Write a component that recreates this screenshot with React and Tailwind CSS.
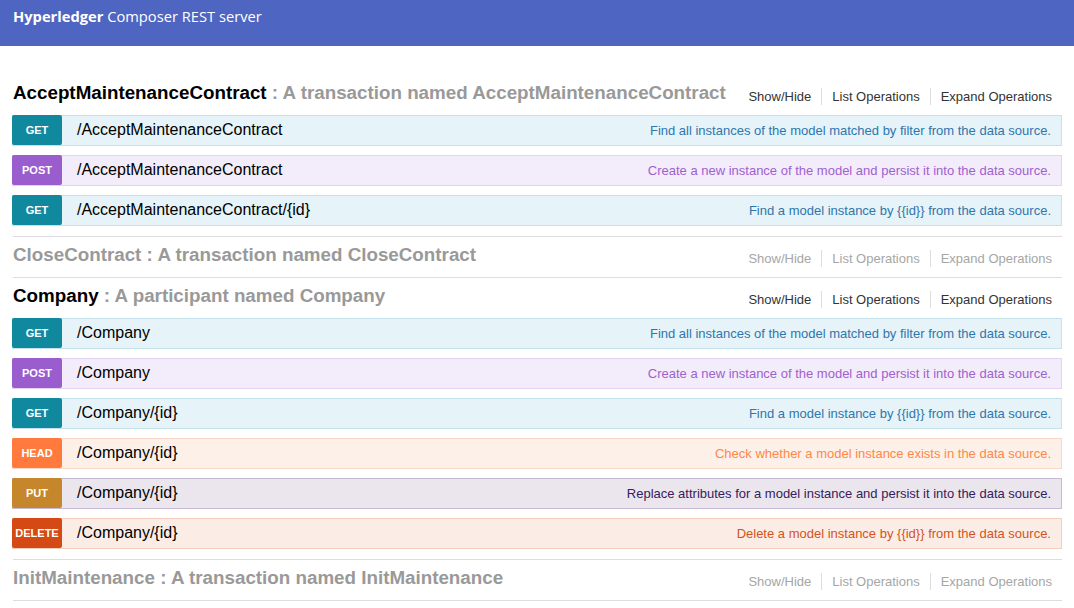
const METHODS = {
  GET: { badge: "bg-[#10889e]", row: "bg-[#e6f3f8] border-[#c3e2ec]", desc: "text-[#2f76ad]" },
  POST: { badge: "bg-[#9a5dce]", row: "bg-[#f3ecfa] border-[#e3d2f3]", desc: "text-[#9e61d0]" },
  HEAD: { badge: "bg-[#ff7a3c]", row: "bg-[#fdf0e8] border-[#fad8c6]", desc: "text-[#ff8748]" },
  PUT: { badge: "bg-[#c6862b]", row: "bg-[#ebe6ee] border-[#c8bad4]", desc: "text-[#37205a]" },
  DELETE: { badge: "bg-[#d44914]", row: "bg-[#fbede6] border-[#f5cdbb]", desc: "text-[#d4531c]" },
};

const resources = [
  {
    name: "AcceptMaintenanceContract",
    desc: "A transaction named AcceptMaintenanceContract",
    open: true,
    ops: [
      ["GET", "/AcceptMaintenanceContract", "Find all instances of the model matched by filter from the data source."],
      ["POST", "/AcceptMaintenanceContract", "Create a new instance of the model and persist it into the data source."],
      ["GET", "/AcceptMaintenanceContract/{id}", "Find a model instance by {{id}} from the data source."],
    ],
  },
  { name: "CloseContract", desc: "A transaction named CloseContract", open: false, ops: [] },
  {
    name: "Company",
    desc: "A participant named Company",
    open: true,
    ops: [
      ["GET", "/Company", "Find all instances of the model matched by filter from the data source."],
      ["POST", "/Company", "Create a new instance of the model and persist it into the data source."],
      ["GET", "/Company/{id}", "Find a model instance by {{id}} from the data source."],
      ["HEAD", "/Company/{id}", "Check whether a model instance exists in the data source."],
      ["PUT", "/Company/{id}", "Replace attributes for a model instance and persist it into the data source."],
      ["DELETE", "/Company/{id}", "Delete a model instance by {{id}} from the data source."],
    ],
  },
  { name: "InitMaintenance", desc: "A transaction named InitMaintenance", open: false, ops: [] },
];

function Operation({ method, path, desc }) {
  const m = METHODS[method];
  return (
    <div className={`flex items-center h-[31px] border mb-[9px] ${m.row}`}>
      <span className={`w-[50px] h-[30px] -mt-px -ml-px shrink-0 rounded-[2px] flex items-center justify-center text-[11px] font-bold text-white ${m.badge}`}>
        {method}
      </span>
      <span className="ml-[15px] text-[16px] text-black flex-1 -mt-px">{path}</span>
      <span className={`pr-[10px] text-[13px] ${m.desc}`}>{desc}</span>
    </div>
  );
}

function Resource({ r }) {
  const links = ["Show/Hide", "List Operations", "Expand Operations"];
  return (
    <div className="border-b border-[#dddddd] ml-px">
      <div className="h-10 flex items-center justify-between">
        <h2 className="text-[18.8px] font-bold text-[#999999] whitespace-nowrap -mt-[3px]">
          <span className={r.open ? "text-black" : ""}>{r.name}</span> : {r.desc}
        </h2>
        <ul className={`flex shrink-0 whitespace-nowrap text-[13px] mr-[10px] mt-[3px] ${r.open ? "text-[#333333]" : "text-[#a6a6a6]"}`}>
          {links.map((l, i) => (
            <li key={l} className={`px-[10px] leading-[17px] last:pr-0 ${i < 2 ? "border-r border-[#dddddd]" : ""}`}>
              {l}
            </li>
          ))}
        </ul>
      </div>
      {r.open && (
        <div className="-ml-px pb-px">
          {r.ops.map(([method, path, desc], i) => (
            <Operation key={i} method={method} path={path} desc={desc} />
          ))}
        </div>
      )}
    </div>
  );
}

export default function App() {
  return (
    <div className="min-h-[608px] bg-white" style={{ fontFamily: "'Liberation Sans', Arial, sans-serif" }}>
      <div className="h-[46px] bg-[#4f65c2] px-[13px] pt-[5px]">
        <span className="text-white text-[14.7px]" style={{ fontFamily: "'Open Sans', sans-serif" }}>
          <b>Hyperledger</b> Composer REST server
        </span>
      </div>
      <div className="px-3 pt-[29px]">
        {resources.map((r) => (
          <Resource key={r.name} r={r} />
        ))}
      </div>
    </div>
  );
}
